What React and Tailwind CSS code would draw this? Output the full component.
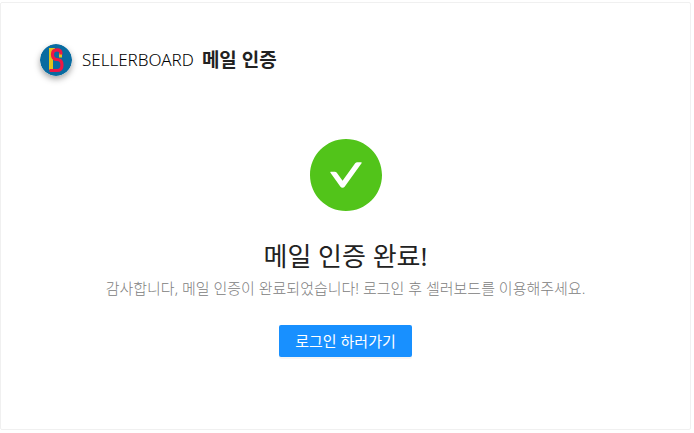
function Logo() {
  return (
    <svg
      viewBox="0 0 32 32"
      aria-hidden="true"
      className="size-8 shrink-0 rounded-full shadow-[0_3px_6px_rgba(0,0,0,0.35)]"
    >
      <circle cx="16" cy="16" r="16" fill="#086ba0" />
      <path d="M9 4H15V7H13V26H9Z" fill="#e0c41c" />
      <path d="M20.500 9V13.500" fill="none" stroke="#e0c41c" strokeWidth="3" />
      <path
        d="M21 10.500V9.500Q21 5.800 17 5.800Q12.500 5.800 12.500 10.500Q12.500 15.500 17 15.500Q22 15.500 22 21Q22 26.500 17 26.500H9.500"
        fill="none"
        stroke="#ee1744"
        strokeWidth="3.200"
      />
    </svg>
  );
}

function SuccessIcon() {
  return (
    <svg viewBox="64 64 896 896" fill="#52c41a" aria-hidden="true" className="size-[72px]">
      <path d="M512 64C264.6 64 64 264.6 64 512s200.6 448 448 448 448-200.6 448-448S759.4 64 512 64zm193.5 301.7l-210.6 292a31.8 31.8 0 0 1-51.7 0L318.5 484.9c-3.8-5.3 0-12.7 6.5-12.7h46.9c10.2 0 19.9 4.9 25.9 13.3l71.2 98.8 157.2-218c6-8.3 15.6-13.3 25.9-13.3H699c6.5 0 10.3 7.4 6.5 12.7z" />
    </svg>
  );
}

export default function App() {
  return (
    <div className="bg-white pt-[2px] pr-[3px] pb-[3px] font-['Noto_Sans','Noto_Sans_CJK_KR',sans-serif]">
      <main className="rounded-xs border border-[#f0f0f0] px-[39px] pt-[41px] pb-[72px]">
        <header className="flex items-center gap-[10px]">
          <Logo />
          <h1 className="flex items-center gap-2 text-[17px] leading-8 font-light whitespace-nowrap text-black">
            <span>SELLERBOARD</span>
            <strong className="text-[19px] font-bold text-[#222]">메일 인증</strong>
          </h1>
        </header>
        <section className="mt-[63px] flex flex-col items-center text-center">
          <SuccessIcon />
          <h2 className="mt-6 text-[26px] leading-[42px] font-normal text-[#222]">메일 인증 완료!</h2>
          <p className="text-[15px] leading-[22px] font-light text-[#808080]">
            감사합니다, 메일 인증이 완료되었습니다! 로그인 후 셀러보드를 이용해주세요.
          </p>
          <button
            type="button"
            className="mt-[26px] h-8 rounded-xs bg-[#1890ff] px-4 text-[15px] whitespace-nowrap text-white shadow-[0_2px_0_rgba(0,0,0,0.04)]"
          >
            로그인 하러가기
          </button>
        </section>
      </main>
    </div>
  );
}
